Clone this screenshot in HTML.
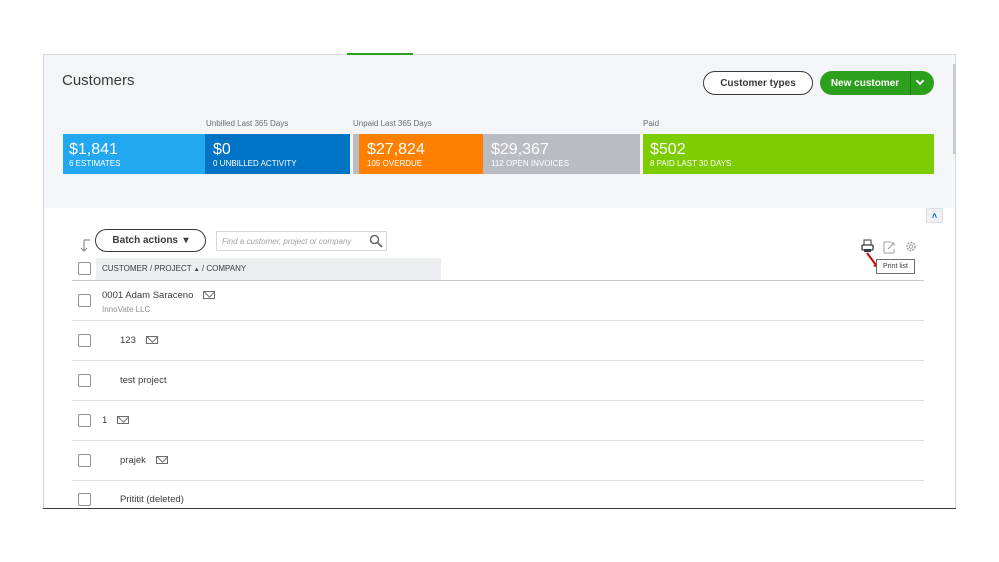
<!DOCTYPE html>
<html><head><style>
*{margin:0;padding:0;box-sizing:border-box}
body{width:999px;height:562px;background:#fff;font-family:"Liberation Sans",sans-serif;position:relative;overflow:hidden;color:#393a3d}
.a{position:absolute}
.btn{display:flex;align-items:center;justify-content:center}
.bar{position:absolute;top:134px;height:40px;color:#fff;padding:7px 0 0 6px}
.bar b{display:block;font-weight:normal;font-size:16px;line-height:17px}
.bar i{display:block;font-style:normal;font-size:8px;margin-top:1px}
.lbl{position:absolute;top:119px;font-size:8px;color:#6b6c72}
.cb{position:absolute;left:78px;width:13px;height:13px;border:1px solid #8d9096;border-radius:2px;background:#fff}
.row{position:absolute;left:72px;width:852px;height:1px;background:#dcdde0}
.t{position:absolute;font-size:9.5px;color:#393a3d}
.env{display:inline-block;width:12px;height:8px;border:1px solid #6b6c72;position:relative;vertical-align:middle;margin-left:7px;overflow:hidden}
.env:after{content:"";position:absolute;left:1px;top:-5px;width:7px;height:7px;border:1px solid #6b6c72;transform:rotate(45deg)}
</style></head><body>
<div class="a" style="left:43px;top:54px;width:913px;height:154px;background:#f4f5f8;border-top:1px solid #dcdde0"></div>
<div class="a" style="left:43px;top:54px;width:1px;height:454px;background:#d4d7dc"></div>
<div class="a" style="left:955px;top:54px;width:1px;height:454px;background:#d4d7dc"></div>
<div class="a" style="left:953px;top:64px;width:3px;height:90px;background:#c8cacf"></div>
<div class="a" style="left:347px;top:53px;width:66px;height:2px;background:#2ca01c"></div>
<div class="a" style="left:43px;top:508px;width:913px;height:1px;background:#393a3d"></div>
<div class="a" style="left:62px;top:72px;font-size:15px;color:#393a3d">Customers</div>
<div class="a btn" style="left:703px;top:71px;width:110px;height:24px;border:1.5px solid #393a3d;border-radius:12px;font-size:10px;font-weight:bold;background:#fff">Customer types</div>
<div class="a" style="left:820px;top:71px;width:114px;height:24px;border-radius:12px;background:#2ca01c"></div>
<div class="a btn" style="left:820px;top:71px;width:90px;height:24px;color:#fff;font-size:10px;font-weight:bold">New customer</div>
<div class="a" style="left:910px;top:71px;width:1px;height:24px;background:#1d7a13"></div>
<div class="a" style="left:917px;top:78px;width:6px;height:6px;border-right:2px solid #fff;border-bottom:2px solid #fff;transform:rotate(45deg)"></div>
<div class="lbl" style="left:206px">Unbilled Last 365 Days</div>
<div class="lbl" style="left:353px">Unpaid Last 365 Days</div>
<div class="lbl" style="left:643px">Paid</div>
<div class="bar" style="left:63px;width:142px;background:#21a8f0"><b>$1,841</b><i>6 ESTIMATES</i></div>
<div class="bar" style="left:205px;width:145px;background:#0073c5;padding-left:8px"><b>$0</b><i>0 UNBILLED ACTIVITY</i></div>
<div class="bar" style="left:353px;width:6px;background:#b9bcc3"></div>
<div class="bar" style="left:359px;width:124px;background:#ff8000;padding-left:8px"><b>$27,824</b><i>105 OVERDUE</i></div>
<div class="bar" style="left:483px;width:157px;background:#b9bcc3;padding-left:8px"><b>$29,367</b><i>112 OPEN INVOICES</i></div>
<div class="bar" style="left:643px;width:291px;background:#7dcc00;padding-left:7px"><b>$502</b><i>8 PAID LAST 30 DAYS</i></div>
<div class="a btn" style="left:926px;top:208px;width:17px;height:15px;background:#eef0f4;border:1px solid #dcdde0;color:#0077c5;font-size:9px;font-weight:bold">&#708;</div>
<svg class="a" style="left:80px;top:239px" width="12" height="14"><path d="M4 1h6M4 1v11M1 9l3 3 3-3" fill="none" stroke="#8d9096" stroke-width="1.2"/></svg>
<div class="a btn" style="left:95px;top:229px;width:111px;height:23px;border:1.5px solid #393a3d;border-radius:12px;font-size:10px;font-weight:bold;background:#fff">Batch actions &nbsp;&#9662;</div>
<div class="a" style="left:216px;top:231px;width:171px;height:20px;border:1px solid #d4d7dc;font-size:8px;font-style:italic;color:#a0a2a8;line-height:19px;padding-left:5px;background:#fff">Find a customer, project or company</div>
<svg class="a" style="left:369px;top:234px" width="14" height="14"><circle cx="5.5" cy="5.5" r="4" fill="none" stroke="#6b6c72" stroke-width="1.5"/><line x1="8.5" y1="8.5" x2="13" y2="13" stroke="#6b6c72" stroke-width="1.8"/></svg>
<svg class="a" style="left:861px;top:239px" width="60" height="16"><rect x="3" y="1" width="7" height="5" fill="none" stroke="#393a3d"/><rect x="1" y="6" width="11" height="5" rx="1" fill="none" stroke="#393a3d" stroke-width="1.3"/><rect x="3" y="10" width="7" height="3" fill="#393a3d"/><path d="M23 3h7M23 3v11h10v-4" fill="none" stroke="#a0a2a8"/><path d="M27 10l6-6M30 4h3v3" fill="none" stroke="#a0a2a8"/><circle cx="50" cy="7.5" r="4" fill="none" stroke="#a0a2a8" stroke-width="1.5" stroke-dasharray="2 1"/><circle cx="50" cy="7.5" r="1.8" fill="none" stroke="#a0a2a8"/></svg>
<svg class="a" style="left:864px;top:251px" width="20" height="20"><line x1="3" y1="2" x2="12" y2="14" stroke="#c00" stroke-width="2"/><path d="M9 15l6 2-1-6z" fill="#c00"/></svg>
<div class="a" style="left:876px;top:259px;width:39px;height:15px;border:1px solid #6b6c72;background:#fff;font-size:7px;line-height:13px;text-align:center">Print list</div>
<div class="a" style="left:96px;top:258px;width:345px;height:22px;background:#eceef1"></div>
<div class="t" style="left:102px;top:264px;font-size:8px">CUSTOMER / PROJECT <span style="font-size:6px">&#9650;</span> / COMPANY</div>
<div class="a" style="left:72px;top:280px;width:852px;height:1px;background:#c8cacf"></div>
<div class="cb" style="top:262px"></div>
<div class="cb" style="top:294px"></div><div class="t" style="left:102px;top:290px">0001 Adam Saraceno <span class="env"></span></div>
<div class="t" style="left:102px;top:305px;font-size:8px;color:#8d9096">InnoVate LLC</div>
<div class="row" style="top:320px"></div>
<div class="cb" style="top:334px"></div><div class="t" style="left:120px;top:335px">123 <span class="env"></span></div>
<div class="row" style="top:360px"></div>
<div class="cb" style="top:374px"></div><div class="t" style="left:120px;top:375px">test project</div>
<div class="row" style="top:400px"></div>
<div class="cb" style="top:414px"></div><div class="t" style="left:102px;top:415px">1 <span class="env"></span></div>
<div class="row" style="top:440px"></div>
<div class="cb" style="top:454px"></div><div class="t" style="left:120px;top:455px">prajek <span class="env"></span></div>
<div class="row" style="top:480px"></div>
<div class="cb" style="top:493px"></div><div class="t" style="left:120px;top:494px">Prititit (deleted)</div>
</body></html>
